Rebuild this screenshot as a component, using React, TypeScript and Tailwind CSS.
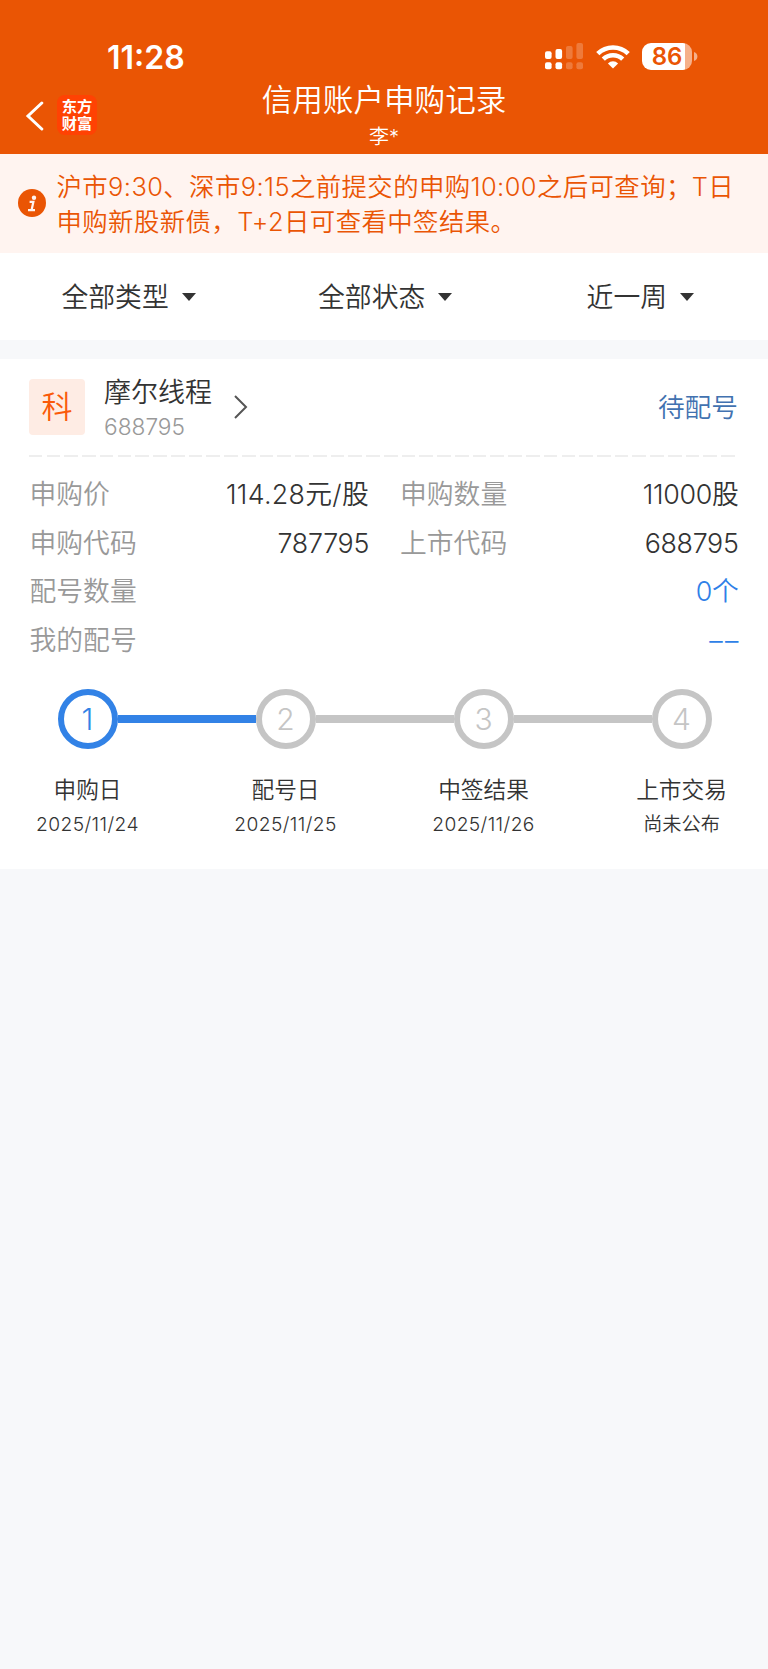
import { clsx } from 'clsx';

interface Step {
  label: string;
  date: string;
  active: boolean;
}

const filters = ['全部类型', '全部状态', '近一周'];

const steps: Step[] = [
  { label: '申购日', date: '2025/11/24', active: true },
  { label: '配号日', date: '2025/11/25', active: false },
  { label: '中签结果', date: '2025/11/26', active: false },
  { label: '上市交易', date: '尚未公布', active: false },
];

const StatusBar = () => (
  <div className="flex h-20 items-start justify-between pt-[38px] pl-[107px] pr-[70.5px]">
    <span className="text-[32px] leading-[40px] font-semibold">11:28</span>
    <div className="flex items-center pt-[5px]">
      <svg width="38" height="27" viewBox="0 0 38 27" fill="currentColor">
        <rect x="0" y="8.3" width="6.6" height="7.7" rx="2" />
        <rect x="0" y="19.3" width="6.6" height="7" rx="2" />
        <rect x="10.5" y="6" width="6.6" height="10" rx="2" />
        <rect x="10.5" y="19.3" width="6.6" height="7" rx="2" />
        <g opacity="0.22">
          <rect x="21" y="3" width="6.6" height="13" rx="2" />
          <rect x="21" y="19.3" width="6.6" height="7" rx="2" />
          <rect x="31.4" y="0" width="6.6" height="16" rx="2" />
          <rect x="31.4" y="19.3" width="6.6" height="7" rx="2" />
        </g>
      </svg>
      <svg className="ml-[13px]" width="34" height="25" viewBox="0 0 34 25" fill="none" stroke="currentColor" strokeWidth="4.6">
        <path d="M1.8 9.6a21.8 21.8 0 0 1 30.4 0" />
        <path d="M7.3 15.2a13.9 13.9 0 0 1 19.4 0" />
        <path d="M17 24.6l-5.1-5.2a7.4 7.4 0 0 1 10.2 0z" fill="currentColor" stroke="none" />
      </svg>
      <div className="ml-3 flex h-[27px] w-[50px] items-center justify-center rounded-[9px] bg-linear-to-r from-white from-86% to-[#f6b08a] to-86% text-[24px] leading-none font-semibold text-[#ea5504]">
        86
      </div>
      <svg className="ml-[1.5px]" width="4" height="9" viewBox="0 0 4 9">
        <path d="M0 0q3.4 1.2 3.4 4.5T0 9z" fill="#f6b08a" />
      </svg>
    </div>
  </div>
);

const Header = () => (
  <header className="h-[153.5px] bg-[#ea5504] text-white">
    <StatusBar />
    <div className="grid grid-cols-[1fr_auto_1fr]">
      <div className="flex items-start pt-[15px] pl-[25px]">
        <svg
          className="mt-[6px]"
          width="19"
          height="30"
          viewBox="0 0 19 30"
          fill="none"
          stroke="currentColor"
          strokeWidth="3"
          strokeLinecap="round"
        >
          <path d="M16.8 2L3 15l13.8 13" />
        </svg>
        <div className="ml-[13px] flex size-10 flex-col items-center justify-center rounded-lg bg-[#ff4203] text-[15.3px] leading-[17px] font-bold">
          <span>东方</span>
          <span>财富</span>
        </div>
      </div>
      <div className="flex flex-col items-center">
        <h1 className="text-[30.6px] leading-[40px] font-[350]">信用账户申购记录</h1>
        <p className="mt-[3px] text-[20px] leading-[28px] font-[350]">李*</p>
      </div>
    </div>
  </header>
);

const Notice = () => (
  <div className="flex h-[99.5px] items-center bg-[#fff4f0] pl-[18px] text-[#ea5504]">
    <svg className="shrink-0" width="28" height="28" viewBox="0 0 28 28">
      <circle cx="14" cy="14" r="14" fill="currentColor" />
      <circle cx="16" cy="8.8" r="2.2" fill="#fff4f0" />
      <path d="M11.6 12.8h3.8l-1.8 8.2M10 21.1h7" fill="none" stroke="#fff4f0" strokeWidth="2.2" />
    </svg>
    <p className="mt-px ml-[10.5px] text-[25.4px] leading-[35px] font-[350] tracking-[0.42px] whitespace-nowrap">
      沪市9:30、深市9:15之前提交的申购10:00之后可查询；T日
      <br />
      申购新股新债，T+2日可查看中签结果。
    </p>
  </div>
);

const FilterBar = () => (
  <div className="flex h-[87px] items-center justify-between bg-white pt-px pr-[74px] pl-[61.5px] text-[#333]">
    {filters.map((label) => (
      <button key={label} className="flex items-center text-[26.8px] leading-10 font-[350] nth-2:mr-3">
        {label}
        <svg className="mb-px ml-[13px]" width="14" height="8" viewBox="0 0 14 8" fill="currentColor">
          <path d="M0 0h14L7 8z" />
        </svg>
      </button>
    ))}
  </div>
);

interface RowProps {
  label: string;
  value: string;
  blue?: boolean;
  spacing?: string;
}

const Row = ({ label, value, blue, spacing = 'tracking-[-0.3px]' }: RowProps) => (
  <div className={clsx('flex items-center justify-between', blue && 'col-span-2')}>
    <span className="text-[#999]">{label}</span>
    <span className={clsx(spacing, blue ? 'text-[#2f80e7]' : 'text-[#333]')}>{value}</span>
  </div>
);

const StepItem = ({ step, index }: { step: Step; index: number }) => (
  <div className="flex flex-col items-center text-[#333]">
    <div className="flex w-full items-center">
      <div
        className={clsx(
          'h-2 flex-1',
          index === 0 ? 'bg-transparent' : steps[index - 1].active ? 'bg-[#3282e6]' : 'bg-[#c5c5c5]'
        )}
      />
      <div
        className={clsx(
          'flex size-[60px] items-center justify-center rounded-full border-6 text-[30px] font-light',
          step.active ? 'border-[#3282e6] text-[#3282e6]' : 'border-[#c5c5c5] text-[#c5c5c5]'
        )}
      >
        {index + 1}
      </div>
      <div
        className={clsx(
          'h-2 flex-1',
          index === steps.length - 1 ? 'bg-transparent' : step.active ? 'bg-[#3282e6]' : 'bg-[#c5c5c5]'
        )}
      />
    </div>
    <p className="mt-6 text-[22.7px] leading-[34px] font-[350]">{step.label}</p>
    <p className={clsx('mt-px text-[19.2px] leading-8 font-[350]', step.date.includes('/') && 'tracking-[0.4px]')}>
      {step.date}
    </p>
  </div>
);

const RecordCard = () => (
  <section className="mt-[19px] h-[510px] overflow-hidden bg-white pt-5">
    <div className="mx-[29px] flex h-14 items-center">
      <div className="flex size-14 items-center justify-center rounded bg-[#feece4] text-[31px] font-[350] text-[#fa5a0a]">
        科
      </div>
      <div className="mt-[3px] ml-[19px] flex flex-col">
        <span className="text-[27px] leading-9 font-[350] text-[#333]">摩尔线程</span>
        <span className="text-[22.7px] leading-8 font-[350] text-[#999]">688795</span>
      </div>
      <svg className="ml-[22px]" width="14" height="24" viewBox="0 0 14 24" fill="none" stroke="#555" strokeWidth="2">
        <path d="M1 1l11 11L1 23" />
      </svg>
      <span className="mt-px mr-px ml-auto text-[26.7px] font-[350] text-[#4272b0]">待配号</span>
    </div>

    <div className="mx-[29px] mt-5 h-0.5 bg-[repeating-linear-gradient(90deg,#eee_0_13.5px,transparent_13.5px_17.75px)]" />

    <div className="mt-[13px] ml-[29.5px] grid grid-cols-[339.5px_338.5px] gap-x-[31px] auto-rows-[48.6px] text-[26.8px] font-[350]">
      <Row label="申购价" value="114.28元/股" spacing="tracking-[0.3px]" />
      <Row label="申购数量" value="11000股" />
      <Row label="申购代码" value="787795" />
      <Row label="上市代码" value="688795" />
      <Row label="配号数量" value="0个" blue />
      <Row label="我的配号" value="––" blue spacing="tracking-[2.4px] -mr-[2.4px]" />
    </div>

    <div className="mt-[25px] -mr-[12.5px] -ml-[11.5px] grid grid-cols-4">
      {steps.map((step, index) => (
        <StepItem key={step.label} step={step} index={index} />
      ))}
    </div>
  </section>
);

export default function App() {
  return (
    <div className="min-h-[1669px] w-[768px] bg-[#f7f8fa] font-[Inter,'Noto_Sans_CJK_SC',sans-serif]">
      <Header />
      <Notice />
      <FilterBar />
      <RecordCard />
    </div>
  );
}
